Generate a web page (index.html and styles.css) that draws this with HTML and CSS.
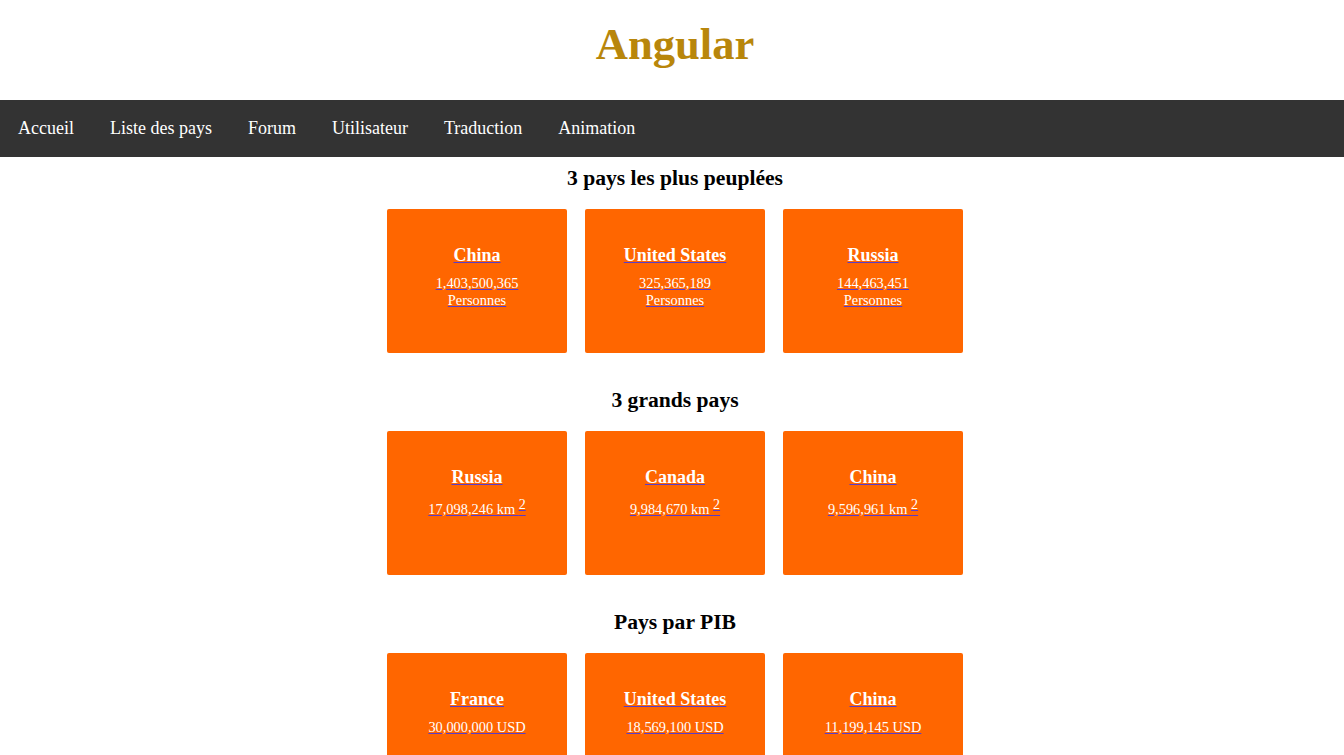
FILE: index.html
```html
<!DOCTYPE html>
<html lang="fr">
<head>
<meta charset="utf-8">
<title>Angular</title>
<link rel="stylesheet" href="styles.css">
</head>
<body>
<header class="header">
  <h1 class="title">Angular</h1>
</header>
<nav class="nav">
  <a class="nav-link" href="#">Accueil</a>
  <a class="nav-link" href="#">Liste des pays</a>
  <a class="nav-link" href="#">Forum</a>
  <a class="nav-link" href="#">Utilisateur</a>
  <a class="nav-link" href="#">Traduction</a>
  <a class="nav-link" href="#">Animation</a>
</nav>
<main class="main">
  <section class="section">
    <h2 class="section-title">3 pays les plus peuplées</h2>
    <div class="grid">
      <a class="card" href="#"><h4 class="card-title">China</h4><div class="card-text">1,403,500,365<br>Personnes</div></a>
      <a class="card" href="#"><h4 class="card-title">United States</h4><div class="card-text">325,365,189<br>Personnes</div></a>
      <a class="card" href="#"><h4 class="card-title">Russia</h4><div class="card-text">144,463,451<br>Personnes</div></a>
    </div>
  </section>
  <section class="section">
    <h2 class="section-title">3 grands pays</h2>
    <div class="grid">
      <a class="card" href="#"><h4 class="card-title">Russia</h4><div class="card-text">17,098,246 km <sup class="sup">2</sup></div></a>
      <a class="card" href="#"><h4 class="card-title">Canada</h4><div class="card-text">9,984,670 km <sup class="sup">2</sup></div></a>
      <a class="card" href="#"><h4 class="card-title">China</h4><div class="card-text">9,596,961 km <sup class="sup">2</sup></div></a>
    </div>
  </section>
  <section class="section">
    <h2 class="section-title">Pays par PIB</h2>
    <div class="grid">
      <a class="card" href="#"><h4 class="card-title">France</h4><div class="card-text">30,000,000 USD</div></a>
      <a class="card" href="#"><h4 class="card-title">United States</h4><div class="card-text">18,569,100 USD</div></a>
      <a class="card" href="#"><h4 class="card-title">China</h4><div class="card-text">11,199,145 USD</div></a>
    </div>
  </section>
</main>
</body>
</html>
```
FILE: styles.css
```css
html, body {
  margin: 0;
  padding: 0;
  background: #ffffff;
}
body {
  font-family: "Liberation Serif", "Times New Roman", serif;
  font-size: 14.4px;
  color: #000;
}
.header {
  padding: 19px 0 30px 6px;
  text-align: center;
}
.title {
  margin: 0;
  font-size: 44.6px;
  font-weight: bold;
  color: #b8860b;
  line-height: 51px;
}
.nav {
  display: flex;
  background: #333333;
  height: 57px;
  align-items: center;
}
.nav-link {
  display: block;
  padding: 0 18px;
  color: #ffffff;
  text-decoration: none;
  font-size: 18px;
  line-height: 21px;
}
.main {
  display: flex;
  flex-direction: column;
  align-items: center;
  padding: 9px 0 0 6px;
  gap: 35px;
}
.section {
  display: flex;
  flex-direction: column;
  align-items: center;
}
.section-title {
  margin: 0 0 18px;
  font-size: 21.6px;
  line-height: 25px;
  font-weight: bold;
}
.grid {
  display: flex;
  gap: 18px;
}
.card {
  box-sizing: border-box;
  width: 180px;
  height: 144px;
  background: #ff6600;
  border-radius: 2px;
  padding: 36px 10px 0;
  text-align: center;
  color: #5a3cc8;
  text-decoration: underline;
}
.card-title {
  margin: 0 0 9px;
  font-size: 18px;
  line-height: 21px;
  font-weight: bold;
  color: #ffffff;
}
.card-text {
  color: #ffffff;
  font-size: 14.4px;
}
.sup {
  font-size: 14px;
  vertical-align: 5px;
  text-decoration: underline;
  text-decoration-color: #5a3cc8;
}
```
